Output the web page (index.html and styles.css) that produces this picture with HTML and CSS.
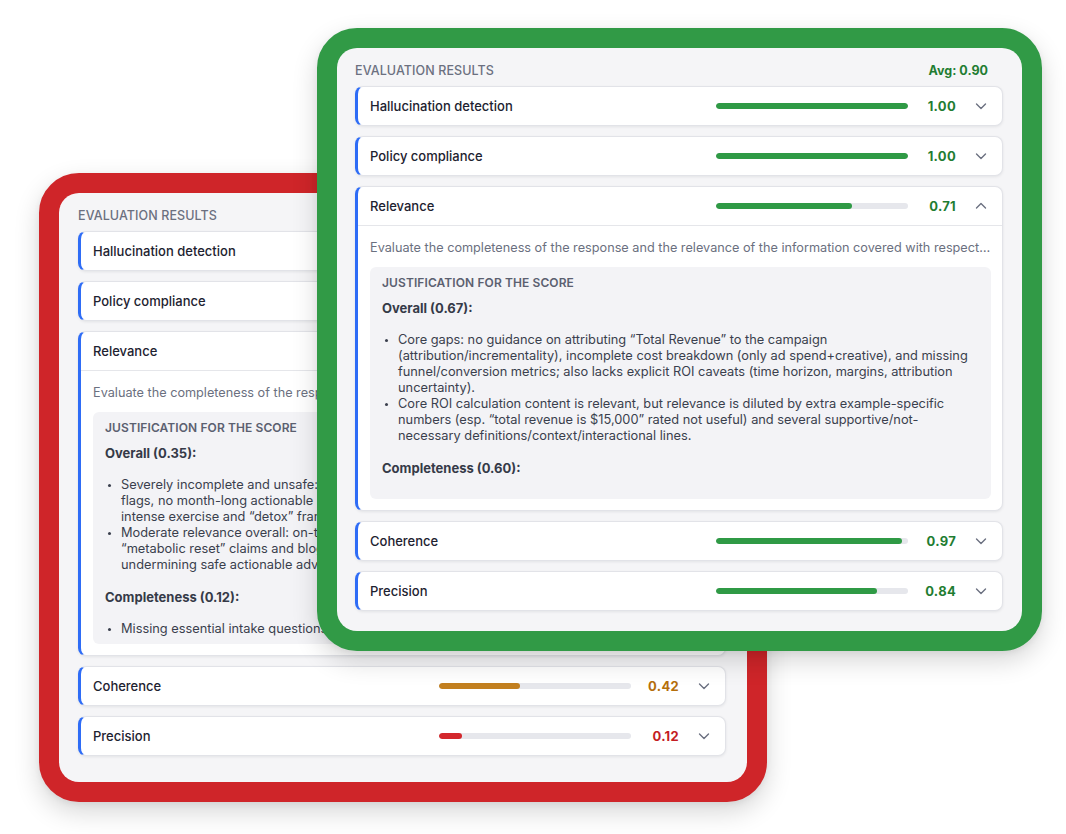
FILE: index.html
```html
<!DOCTYPE html>
<html lang="en">
<head>
<meta charset="utf-8">
<title>Evaluation results</title>
<link rel="stylesheet" href="styles.css">
</head>
<body>
<div class="canvas">

  <section class="card card--fail">
    <div class="panel">
      <div class="panel-head">
        <span class="panel-title">Evaluation results</span>
        <span class="avg avg--bad">Avg: 0.31</span>
      </div>
      <div class="rows">
        <div class="row">
          <div class="row-head">
            <span class="row-label">Hallucination detection</span>
            <span class="bar"><span class="bar-fill fill--warn" style="width:40%"></span></span>
            <span class="score score--warn">0.40</span>
            <svg class="chev" viewBox="0 0 16 16"><polyline points="3.5,6 8,10.5 12.5,6"/></svg>
          </div>
        </div>
        <div class="row">
          <div class="row-head">
            <span class="row-label">Policy compliance</span>
            <span class="bar"><span class="bar-fill fill--warn" style="width:50%"></span></span>
            <span class="score score--warn">0.50</span>
            <svg class="chev" viewBox="0 0 16 16"><polyline points="3.5,6 8,10.5 12.5,6"/></svg>
          </div>
        </div>
        <div class="row row--open">
          <div class="row-head">
            <span class="row-label">Relevance</span>
            <span class="bar"><span class="bar-fill fill--bad" style="width:24%"></span></span>
            <span class="score score--bad">0.24</span>
            <svg class="chev" viewBox="0 0 16 16"><polyline points="3.5,10 8,5.5 12.5,10"/></svg>
          </div>
          <div class="row-body">
            <p class="desc">Evaluate the completeness of the response and the relevance of the information covered with respect to the user question.</p>
            <div class="just">
              <div class="just-title">Justification for the score</div>
              <p class="just-head">Overall (0.35):</p>
              <ul class="just-list">
                <li>Severely incomplete and unsafe: no intake or screening questions, no mention of medical red flags, no month-long actionable plan with a safe weekly progression, and it even promotes intense exercise and “detox” framing without caveats.</li>
                <li>Moderate relevance overall: on-topic for the weight loss request, but dominated by vague “metabolic reset” claims and blog-style filler that distract from the user question while undermining safe actionable advice.</li>
              </ul>
              <p class="just-head just-head--gap">Completeness (0.12):</p>
              <ul class="just-list">
                <li>Missing essential intake questions and a personalized plan.</li>
              </ul>
            </div>
          </div>
        </div>
        <div class="row">
          <div class="row-head">
            <span class="row-label">Coherence</span>
            <span class="bar"><span class="bar-fill fill--warn" style="width:42%"></span></span>
            <span class="score score--warn">0.42</span>
            <svg class="chev" viewBox="0 0 16 16"><polyline points="3.5,6 8,10.5 12.5,6"/></svg>
          </div>
        </div>
        <div class="row">
          <div class="row-head">
            <span class="row-label">Precision</span>
            <span class="bar"><span class="bar-fill fill--bad" style="width:12%"></span></span>
            <span class="score score--bad">0.12</span>
            <svg class="chev" viewBox="0 0 16 16"><polyline points="3.5,6 8,10.5 12.5,6"/></svg>
          </div>
        </div>
      </div>
    </div>
  </section>

  <section class="card card--pass">
    <div class="panel">
      <div class="panel-head">
        <span class="panel-title">Evaluation results</span>
        <span class="avg avg--ok">Avg: 0.90</span>
      </div>
      <div class="rows">
        <div class="row">
          <div class="row-head">
            <span class="row-label">Hallucination detection</span>
            <span class="bar"><span class="bar-fill fill--ok" style="width:100%"></span></span>
            <span class="score score--ok">1.00</span>
            <svg class="chev" viewBox="0 0 16 16"><polyline points="3.5,6 8,10.5 12.5,6"/></svg>
          </div>
        </div>
        <div class="row">
          <div class="row-head">
            <span class="row-label">Policy compliance</span>
            <span class="bar"><span class="bar-fill fill--ok" style="width:100%"></span></span>
            <span class="score score--ok">1.00</span>
            <svg class="chev" viewBox="0 0 16 16"><polyline points="3.5,6 8,10.5 12.5,6"/></svg>
          </div>
        </div>
        <div class="row row--open">
          <div class="row-head">
            <span class="row-label">Relevance</span>
            <span class="bar"><span class="bar-fill fill--ok" style="width:71%"></span></span>
            <span class="score score--ok">0.71</span>
            <svg class="chev" viewBox="0 0 16 16"><polyline points="3.5,10 8,5.5 12.5,10"/></svg>
          </div>
          <div class="row-body">
            <p class="desc">Evaluate the completeness of the response and the relevance of the information covered with respect to the user question.</p>
            <div class="just">
              <div class="just-title">Justification for the score</div>
              <p class="just-head">Overall (0.67):</p>
              <ul class="just-list">
                <li>Core gaps: no guidance on attributing “Total Revenue” to the campaign (attribution/incrementality), incomplete cost breakdown (only ad spend+creative), and missing funnel/conversion metrics; also lacks explicit ROI caveats (time horizon, margins, attribution uncertainty).</li>
                <li>Core ROI calculation content is relevant, but relevance is diluted by extra example-specific numbers (esp. “total revenue is $15,000” rated not useful) and several supportive/not-necessary definitions/context/interactional lines.</li>
              </ul>
              <p class="just-head just-head--gap">Completeness (0.60):</p>
            </div>
          </div>
        </div>
        <div class="row">
          <div class="row-head">
            <span class="row-label">Coherence</span>
            <span class="bar"><span class="bar-fill fill--ok" style="width:97%"></span></span>
            <span class="score score--ok">0.97</span>
            <svg class="chev" viewBox="0 0 16 16"><polyline points="3.5,6 8,10.5 12.5,6"/></svg>
          </div>
        </div>
        <div class="row">
          <div class="row-head">
            <span class="row-label">Precision</span>
            <span class="bar"><span class="bar-fill fill--ok" style="width:84%"></span></span>
            <span class="score score--ok">0.84</span>
            <svg class="chev" viewBox="0 0 16 16"><polyline points="3.5,6 8,10.5 12.5,6"/></svg>
          </div>
        </div>
      </div>
    </div>
  </section>

</div>
</body>
</html>
```

FILE: styles.css
```css
* { box-sizing: border-box; }

html, body {
  margin: 0;
  padding: 0;
  background: #ffffff;
}

body {
  font-family: Inter, "Noto Sans", "Liberation Sans", sans-serif;
  color: #1f2430;
  -webkit-font-smoothing: antialiased;
}

.canvas {
  position: relative;
  width: 1066px;
  height: 834px;
  overflow: hidden;
}

.card {
  position: absolute;
  width: 726px;
  border: 20px solid;
  border-radius: 40px;
  box-shadow: 0 10px 26px rgba(0, 0, 0, 0.16), 0 2px 6px rgba(0, 0, 0, 0.06);
}

.card--fail {
  left: 39px;
  top: 173px;
  width: 728px;
  border-color: #cf2529;
  background: #cf2529;
}

.card--pass {
  left: 317px;
  top: 28px;
  width: 725px;
  border-color: #319a46;
  background: #319a46;
}

.panel {
  background: #f5f5f7;
  border-radius: 20px;
  padding: 14px 19px 20px 18px;
}

.card--fail .panel { padding: 14px 21px 26px 19px; }

.panel-head {
  display: flex;
  justify-content: space-between;
  align-items: center;
  height: 16px;
  margin-bottom: 8px;
  padding-right: 15px;
}

.panel-title {
  font-size: 12.5px;
  font-weight: 500;
  text-transform: uppercase;
  color: #6b7080;
  letter-spacing: 0.1px;
}

.avg {
  font-size: 12.5px;
  font-weight: 700;
}
.avg--ok { color: #1f7d32; }
.avg--bad { color: #c21d24; }

.rows {
  display: flex;
  flex-direction: column;
  gap: 10px;
}

.row {
  background: #ffffff;
  border: 1px solid #e2e3e8;
  border-left: 3px solid #2e6cf6;
  border-radius: 8px;
  box-shadow: 0 1px 3px rgba(16, 24, 40, 0.08);
  overflow: hidden;
}

.row-head {
  display: flex;
  align-items: center;
  height: 38px;
  padding: 0 13px 0 12px;
}

.row--open .row-head {
  border-bottom: 1px solid #e5e6ea;
  height: 39px;
}

.row-label {
  flex: 1;
  font-size: 13px;
  font-weight: 500;
  color: #1d2230;
}

.bar {
  width: 192px;
  height: 6px;
  border-radius: 3px;
  background: #e6e7ec;
  overflow: hidden;
  display: flex;
}

.bar-fill {
  display: block;
  height: 100%;
  border-radius: 3px;
}
.fill--ok { background: #2f9a45; }
.fill--warn { background: #c27f1f; }
.fill--bad { background: #d3282d; }

.score {
  width: 48px;
  text-align: right;
  font-size: 13px;
  font-weight: 700;
  letter-spacing: 0.3px;
}
.score--ok { color: #1f7d32; }
.score--warn { color: #b56f0c; }
.score--bad { color: #c41d24; }

.chev {
  width: 16px;
  height: 16px;
  margin-left: 17px;
  fill: none;
  stroke: #6b7080;
  stroke-width: 1.4;
  stroke-linecap: round;
  stroke-linejoin: round;
}

.row-body {
  padding: 13px 11px 11px 12px;
}

.desc {
  margin: 0;
  font-size: 12.7px;
  line-height: 18px;
  color: #6b7080;
  white-space: nowrap;
  overflow: hidden;
  text-overflow: ellipsis;
}

.just {
  margin-top: 10px;
  height: 232px;
  overflow: hidden;
  background: #f3f3f6;
  border-radius: 6px;
  padding: 8px 12px 12px;
}

.just-title {
  font-size: 12px;
  line-height: 16px;
  font-weight: 600;
  text-transform: uppercase;
  color: #5b6070;
  letter-spacing: 0.1px;
}

.just-head {
  margin: 8px 0 0;
  font-size: 13px;
  line-height: 18px;
  font-weight: 700;
  color: #353a48;
}

.just-head--gap { margin-top: 15px; }

.just-list {
  margin: 15px 0 0;
  padding-left: 16px;
  font-size: 12.8px;
  line-height: 16px;
  color: #3a3f4d;
}

.just-list li::marker {
  font-size: 9px;
}
```
